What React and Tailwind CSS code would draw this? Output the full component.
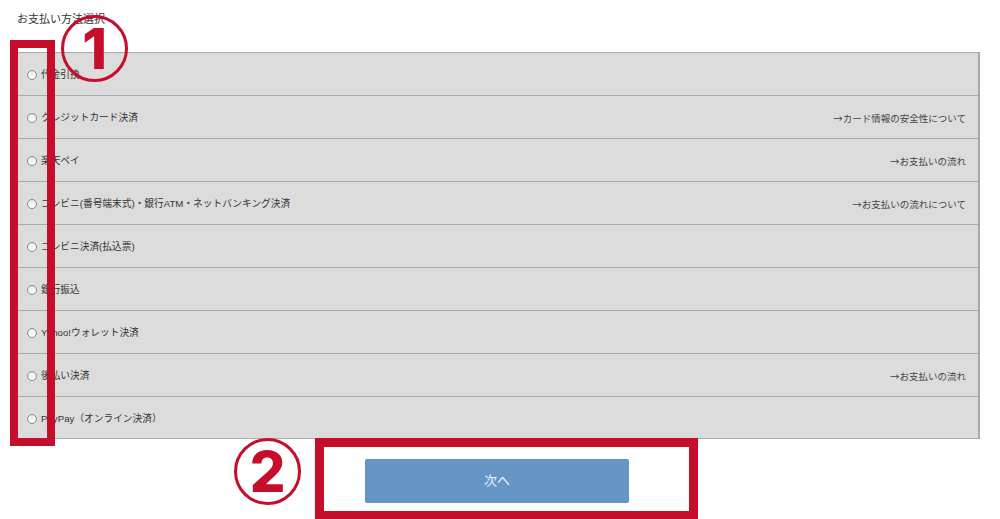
const methods = [
  { label: '代金引換' },
  { label: 'クレジットカード決済', link: '→カード情報の安全性について' },
  { label: '楽天ペイ', link: '→お支払いの流れ' },
  { label: 'コンビニ(番号端末式)・銀行ATM・ネットバンキング決済', link: '→お支払いの流れについて' },
  { label: 'コンビニ決済(払込票)' },
  { label: '銀行振込' },
  { label: 'Yahoo!ウォレット決済' },
  { label: '後払い決済', link: '→お支払いの流れ' },
  { label: 'PayPay（オンライン決済）' },
]

const font = { fontFamily: '"Liberation Sans", "Noto Sans CJK JP", sans-serif' }

function Radio() {
  return (
    <span className="inline-block h-[10px] w-[10px] shrink-0 rounded-full border border-[#8a8a8a] bg-gradient-to-b from-[#e9e9e9] to-white" />
  )
}

function MethodRow({ label, link }) {
  return (
    <div className="flex h-[43px] items-center justify-between border-b border-[#a9a9a9] pl-[9px] pr-[12px] pt-[3px] last:h-[41px] last:border-b-0">
      <label className="flex items-center gap-[4px] text-[9.7px] text-[#333]">
        <Radio />
        <span>{label}</span>
      </label>
      {link && (
        <span
          className="text-[9.5px] text-[#444]"
          style={{ fontFamily: '"Noto Sans CJK JP", sans-serif' }}
        >
          {link}
        </span>
      )}
    </div>
  )
}

function Marker({ n, className }) {
  return (
    <div
      className={`absolute flex h-[67px] w-[67px] items-center justify-center rounded-full border-[3px] border-[#c60d2c] ${className}`}
    >
      <span
        className="text-[56px] font-extrabold leading-none text-[#c60d2c]"
        style={{ fontFamily: 'Inter, sans-serif' }}
      >
        {n}
      </span>
    </div>
  )
}

export default function App() {
  return (
    <div className="relative h-[519px] w-[1000px] overflow-hidden bg-white" style={font}>
      <div className="pl-[17px] pr-[20px] pt-[11px]">
        <h2 className="text-[11px] leading-4 text-[#333]">お支払い方法選択</h2>
        <div className="mt-[25px] border-y border-l border-r-2 border-[#a9a9a9] bg-[#dcdcdc]">
          {methods.map((m) => (
            <MethodRow key={m.label} {...m} />
          ))}
        </div>
        <div className="flex justify-center pr-[3px] pt-[20px]">
          <button className="h-[44px] w-[264px] rounded-[2px] bg-[#6595c4] text-[13px] text-[#eef3f9]">
            次へ
          </button>
        </div>
      </div>

      <div className="absolute left-[10px] top-[40px] h-[406px] w-[45px] border-[8px] border-[#c60d2c]" />
      <Marker n="1" className="left-[61px] top-[15px]" />
      <div className="absolute left-[315px] top-[438px] h-[82px] w-[383px] border-[9px] border-[#c60d2c]" />
      <Marker n="2" className="left-[234px] top-[438px]" />
    </div>
  )
}
